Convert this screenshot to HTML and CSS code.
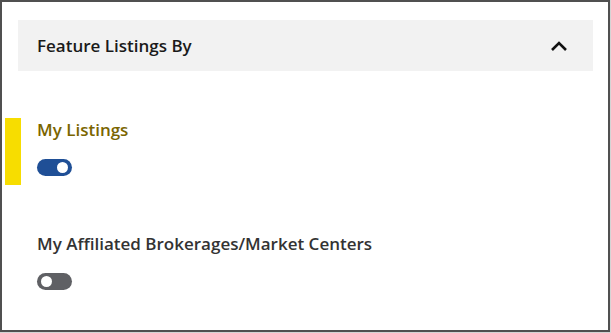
FILE: index.html
```html
<!DOCTYPE html>
<html>
<head>
<meta charset="utf-8">
<link rel="stylesheet" href="styles.css">
</head>
<body>
<div class="card">
  <div class="header">
    <span class="title">Feature Listings By</span>
    <svg class="chev" width="18" height="12" viewBox="0 0 18 12"><path d="M2 10 L9 3 L16 10" fill="none" stroke="#111" stroke-width="2.6"/></svg>
  </div>
  <div class="option active">
    <div class="label">My Listings</div>
    <div class="toggle on"><span class="knob"></span></div>
  </div>
  <div class="option">
    <div class="label">My Affiliated Brokerages/Market Centers</div>
    <div class="toggle off"><span class="knob"></span></div>
  </div>
</div>
</body>
</html>
```

FILE: styles.css
```css
html { background: #d4d4d4; }
body { margin: 0; font-family: "Open Sans", "Noto Sans", sans-serif; }
.card {
  box-sizing: border-box;
  width: 610px;
  height: 332px;
  background: #fff;
  border: 2px solid #505050;
  padding: 18px 15px 0 16px;
}
.header {
  display: flex;
  align-items: center;
  justify-content: space-between;
  height: 51px;
  background: #f2f2f2;
  padding: 0 25px 0 19px;
}
.title { font-size: 17px; font-weight: 600; color: #1a1a1a; }
.chev { display: block; }
.option {
  position: relative;
  padding: 0 0 0 19px;
  height: 67px;
  display: flex;
  flex-direction: column;
  justify-content: space-between;
}
.option.active { margin-top: 47px; }
.option.active::before {
  content: "";
  position: absolute;
  left: -13px;
  top: 0;
  width: 16px;
  height: 67px;
  background: #f7dd00;
}
.option + .option { margin-top: 47px; }
.label { font-size: 17px; font-weight: 600; color: #333; line-height: 22px; margin-top: 1px; }
.option.active .label { color: #7a6500; }
.toggle {
  position: relative;
  width: 35px;
  height: 17px;
  border-radius: 9px;
  margin-bottom: 9px;
}
.toggle.on { background: #1f4f96; }
.toggle.off { background: #5f6064; }
.knob {
  position: absolute;
  top: 3px;
  width: 11px;
  height: 11px;
  border-radius: 50%;
  background: #fff;
}
.on .knob { right: 4px; }
.off .knob { left: 4px; }
```
